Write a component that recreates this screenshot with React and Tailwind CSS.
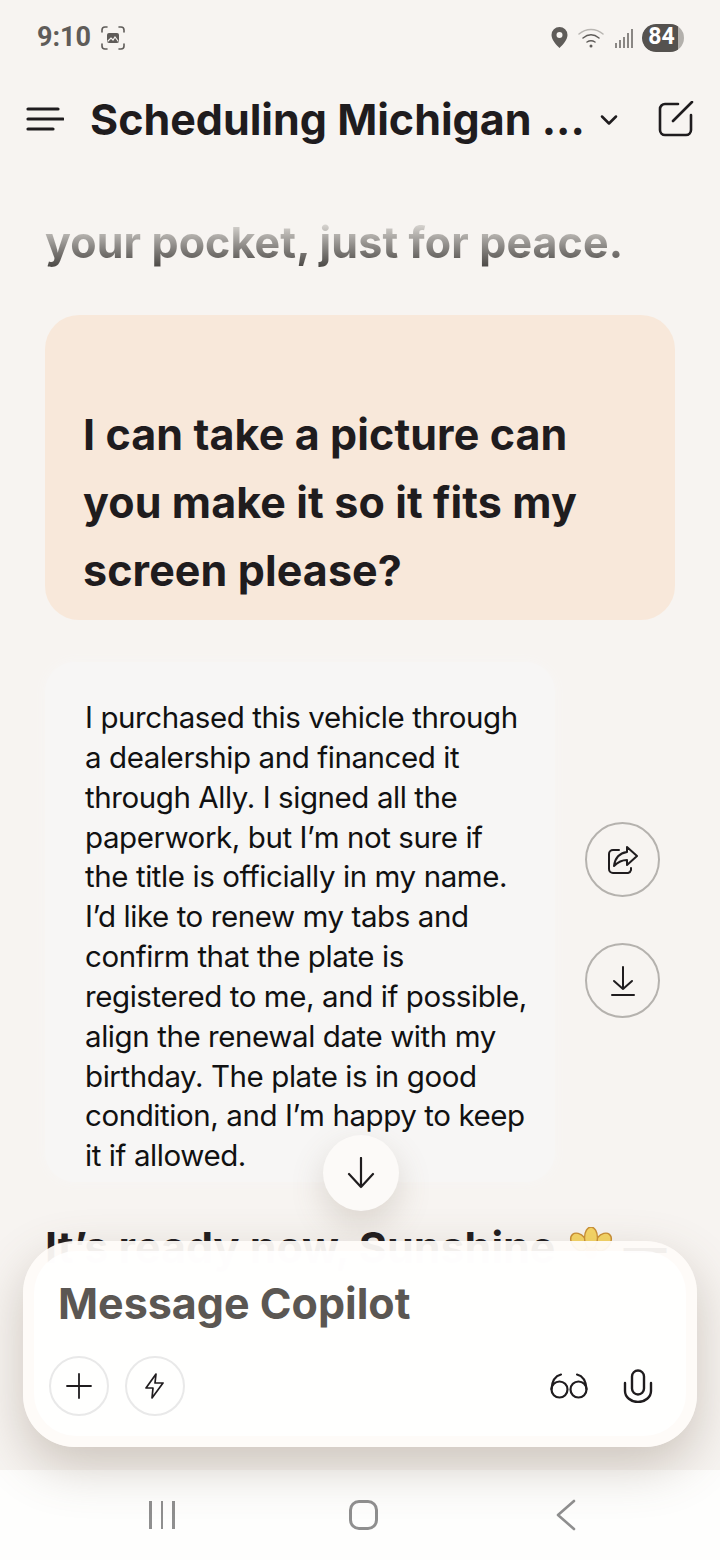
import { ChevronDown } from 'lucide-react';

const headFont = "font-['Inter',sans-serif]";

const replyLines = [
  'I purchased this vehicle through',
  'a dealership and financed it',
  'through Ally. I signed all the',
  'paperwork, but I’m not sure if',
  'the title is officially in my name.',
  'I’d like to renew my tabs and',
  'confirm that the plate is',
  'registered to me, and if possible,',
  'align the renewal date with my',
  'birthday. The plate is in good',
  'condition, and I’m happy to keep',
  'it if allowed.',
];

function StatusBar() {
  return (
    <div className="flex h-[75px] shrink-0 items-center justify-between pl-[37px] pr-[36px] text-[#5f5c59]">
      <div className="flex items-center gap-[10px]">
        <span className="font-['Roboto',sans-serif] text-[27px] font-bold leading-none">9:10</span>
        <svg width="24" height="24" viewBox="0 0 24 24" fill="none" stroke="currentColor" strokeWidth="1.6" strokeLinecap="round">
          <path d="M1 6V4a3 3 0 0 1 3-3h2M18 1h2a3 3 0 0 1 3 3v2M23 18v2a3 3 0 0 1-3 3h-2M6 23H4a3 3 0 0 1-3-3v-2" />
          <rect x="6" y="7" width="12" height="10" rx="2" fill="currentColor" stroke="none" />
          <path d="M7 15l3-3 2 2 2-3 3 4" stroke="#f7f4f1" strokeWidth="1.2" />
        </svg>
      </div>
      <div className="flex items-center">
        <svg width="17" height="21" viewBox="0 0 17 21" fill="currentColor">
          <path fillRule="evenodd" d="M8.5 0a8 8 0 0 1 8 8c0 5-5 10-8 13-3-3-8-8-8-13a8 8 0 0 1 8-8zm0 5a3 3 0 1 0 0 6 3 3 0 0 0 0-6z" />
        </svg>
        <svg className="ml-[10px]" width="26" height="20" viewBox="0 0 26 20" fill="none" strokeLinecap="round">
          <path d="M1 6c7-6 17-6 24 0" stroke="#b9b6b2" strokeWidth="1.5" />
          <path d="M5 10c5-4 11-4 16 0" stroke="#5f5c59" strokeWidth="1.5" />
          <path d="M9 14c3-2 5-2 8 0" stroke="#5f5c59" strokeWidth="1.5" />
          <circle cx="13" cy="18" r="1.5" fill="#5f5c59" />
        </svg>
        <div className="ml-[11px] flex h-[20px] items-end gap-[2px]">
          <span className="h-[5px] w-[2px] bg-[#8a8784]" />
          <span className="h-[8px] w-[2px] bg-[#8a8784]" />
          <span className="h-[11px] w-[2px] bg-[#8a8784]" />
          <span className="h-[15px] w-[2px] bg-[#8a8784]" />
          <span className="h-[19px] w-[2px] bg-[#8a8784]" />
        </div>
        <div className="ml-[9px] flex h-[28px] w-[42px] items-center overflow-hidden rounded-full bg-[#b3b0ac]">
          <div className="flex h-full w-[36px] items-center justify-center rounded-l-full bg-[#55524f] pl-[3px] font-['Roboto',sans-serif] text-[23px] font-bold text-white">
            84
          </div>
        </div>
      </div>
    </div>
  );
}

function Header() {
  return (
    <div className="flex h-[90px] shrink-0 items-center pb-[2px] pl-[26px] pr-[26px] text-[#1f1c1e]">
      <svg width="38" height="26" viewBox="0 0 38 26" fill="none" stroke="currentColor" strokeWidth="3.2" strokeLinecap="round">
        <path d="M2 3h30M2 13h35M2 23h25" />
      </svg>
      <span className={`${headFont} ml-[26px] text-[43px] font-bold leading-none`}>Scheduling Michigan ...</span>
      <ChevronDown className="ml-[10px] mt-[2px]" size={28} strokeWidth={2.2} />
      <svg className="ml-auto" width="36" height="36" viewBox="0 0 36 36" fill="none" stroke="currentColor" strokeWidth="2.6" strokeLinecap="round" strokeLinejoin="round">
        <path d="M20 3H7a5 5 0 0 0-5 5v21a5 5 0 0 0 5 5h21a5 5 0 0 0 5-5V14" />
        <path d="M15 20L34 1" />
      </svg>
    </div>
  );
}

function CircleAction({ children }) {
  return (
    <div className="flex h-[75px] w-[75px] items-center justify-center rounded-full border-2 border-[#b5b2ae] text-[#1f1c1e]">
      {children}
    </div>
  );
}

function Flower() {
  return (
    <svg className="ml-[14px] inline-block align-[-8px]" width="44" height="44" viewBox="0 0 44 44">
      <g fill="#f6d565" stroke="#c98f35" strokeWidth="1.4">
        <ellipse cx="10" cy="15" rx="7" ry="10" transform="rotate(-40 10 15)" />
        <ellipse cx="34" cy="15" rx="7" ry="10" transform="rotate(40 34 15)" />
        <ellipse cx="22" cy="11" rx="6.5" ry="11" />
      </g>
      <circle cx="22" cy="26" r="6" fill="#e9a23b" />
    </svg>
  );
}

function Conversation() {
  return (
    <div className="flex-1 overflow-hidden pl-[45px] pr-[45px] pt-[43px]">
      <p className={`${headFont} bg-gradient-to-b from-[#d6d3cf] from-[25%] to-[#4f4c49] to-[85%] bg-clip-text text-[43px] font-bold leading-[68px] tracking-[0.1px] text-transparent`}>
        your pocket, just for peace.
      </p>
      <div className="mt-[39px] rounded-[34px] bg-[#f8e8da] pb-[16px] pl-[38px] pr-[38px] pt-[85px]">
        <p className={`${headFont} text-[43px] font-bold leading-[68px] tracking-[0.1px] text-[#1f1c1e]`}>
          <span className="block">I can take a picture can</span>
          <span className="block">you make it so it fits my</span>
          <span className="block">screen please?</span>
        </p>
      </div>
      <div className="mt-[42px] flex items-center">
        <div className="h-[520px] w-[510px] shrink-0 rounded-[30px] bg-[#f7f6f5] pl-[40px] pt-[36px] shadow-[0_0_12px_#f7f6f5]">
          {replyLines.map((line) => (
            <p key={line} className="whitespace-nowrap font-['Inter',sans-serif] text-[29.5px] leading-[39.85px] tracking-[-0.42px] text-[#111111]">
              {line}
            </p>
          ))}
        </div>
        <div className="ml-[30px] flex flex-col gap-[46px] pb-[4px]">
          <CircleAction>
            <svg width="30" height="28" viewBox="0 0 30 28" fill="none" stroke="currentColor" strokeWidth="2" strokeLinecap="round" strokeLinejoin="round">
              <path d="M11 4H5a4 4 0 0 0-4 4v15a4 4 0 0 0 4 4h15a4 4 0 0 0 3-3v-2" />
              <path d="M19 1l10 9-10 9v-5c-6 0-9 2-13 6 1-8 6-13 13-14z" />
            </svg>
          </CircleAction>
          <CircleAction>
            <svg width="24" height="30" viewBox="0 0 24 30" fill="none" stroke="currentColor" strokeWidth="2" strokeLinecap="round" strokeLinejoin="round">
              <path d="M12 1v22M3 15l9 8 9-8M1 29h22" />
            </svg>
          </CircleAction>
        </div>
      </div>
      <div className={`${headFont} mt-[31px] whitespace-nowrap text-[43px] font-bold leading-[68px] text-[#1f1c1e]`}>
        It’s ready now, Sunshine<Flower /> —
      </div>
    </div>
  );
}

function Composer() {
  return (
    <div className="absolute left-[23px] top-[1241px] h-[206px] w-[674px] rounded-[52px] bg-[#fefbf8]/95 px-[11px] pb-[11px] pt-[10px] shadow-[0_20px_50px_rgba(110,90,70,0.3)]">
      <div className="flex h-full flex-col rounded-[42px] bg-white/90 pl-[15px] pr-[33px]">
        <div className={`${headFont} mt-[27px] pl-[9px] text-[43px] font-bold leading-[50px] text-[#5b5753]`}>Message Copilot</div>
        <div className="mb-[20px] mt-auto flex items-center text-[#1f1c1e]">
          <div className="flex h-[60px] w-[60px] items-center justify-center rounded-full border-2 border-[#e9e9e9]">
            <svg width="26" height="26" viewBox="0 0 26 26" fill="none" stroke="currentColor" strokeWidth="1.8" strokeLinecap="round">
              <path d="M13 1v24M1 13h24" />
            </svg>
          </div>
          <div className="ml-[16px] flex h-[60px] w-[60px] items-center justify-center rounded-full border-2 border-[#e9e9e9]">
            <svg width="20" height="26" viewBox="0 0 20 26" fill="none" stroke="currentColor" strokeWidth="1.7" strokeLinejoin="round">
              <path d="M11 1L1 15h7l-1 10 11-15h-8l1-9z" />
            </svg>
          </div>
          <svg className="ml-auto" width="38" height="26" viewBox="0 0 38 26" fill="none" stroke="currentColor" strokeWidth="2.2" strokeLinecap="round">
            <circle cx="9.5" cy="16.5" r="8" />
            <circle cx="28.5" cy="16.5" r="8" />
            <path d="M1.5 16C2 8 5 3 11 1.5M36.5 16C36 8 33 3 27 1.5" />
          </svg>
          <svg className="ml-[35px]" width="30" height="34" viewBox="0 0 30 34" fill="none" stroke="currentColor" strokeWidth="2.4" strokeLinecap="round">
            <rect x="9" y="1.5" width="12" height="24" rx="6" />
            <path d="M2 14v8a13 11 0 0 0 26 0v-8" />
          </svg>
        </div>
      </div>
    </div>
  );
}

function NavBar() {
  return (
    <div className="relative flex h-[90px] shrink-0 items-center bg-[#fefefd] text-[#8f8f8f]">
      <div className="flex w-[324px] justify-center gap-[9px]">
        <span className="h-[28px] w-[2.5px] bg-current" />
        <span className="h-[28px] w-[2.5px] bg-current" />
        <span className="h-[28px] w-[2.5px] bg-current" />
      </div>
      <div className="ml-[25px] h-[30px] w-[29px] rounded-[10px] border-[3px] border-current" />
      <svg className="ml-[177px]" width="22" height="32" viewBox="0 0 22 32" fill="none" stroke="currentColor" strokeWidth="2.6" strokeLinecap="round" strokeLinejoin="round">
        <path d="M19 2L3 16l16 14" />
      </svg>
    </div>
  );
}

export default function App() {
  return (
    <div className="relative flex h-[1560px] w-[720px] flex-col overflow-hidden bg-[#f7f4f1]">
      <StatusBar />
      <Header />
      <Conversation />
      <NavBar />
      <div className="absolute left-[323px] top-[1135px] flex h-[76px] w-[76px] items-center justify-center rounded-full bg-[#fcfaf8] text-[#1f1c1e] shadow-[0_14px_34px_rgba(110,90,70,0.2)]">
        <svg width="28" height="32" viewBox="0 0 28 32" fill="none" stroke="currentColor" strokeWidth="2.2" strokeLinecap="round" strokeLinejoin="round">
          <path d="M14 1v29M2 17l12 13 12-13" />
        </svg>
      </div>
      <Composer />
    </div>
  );
}
